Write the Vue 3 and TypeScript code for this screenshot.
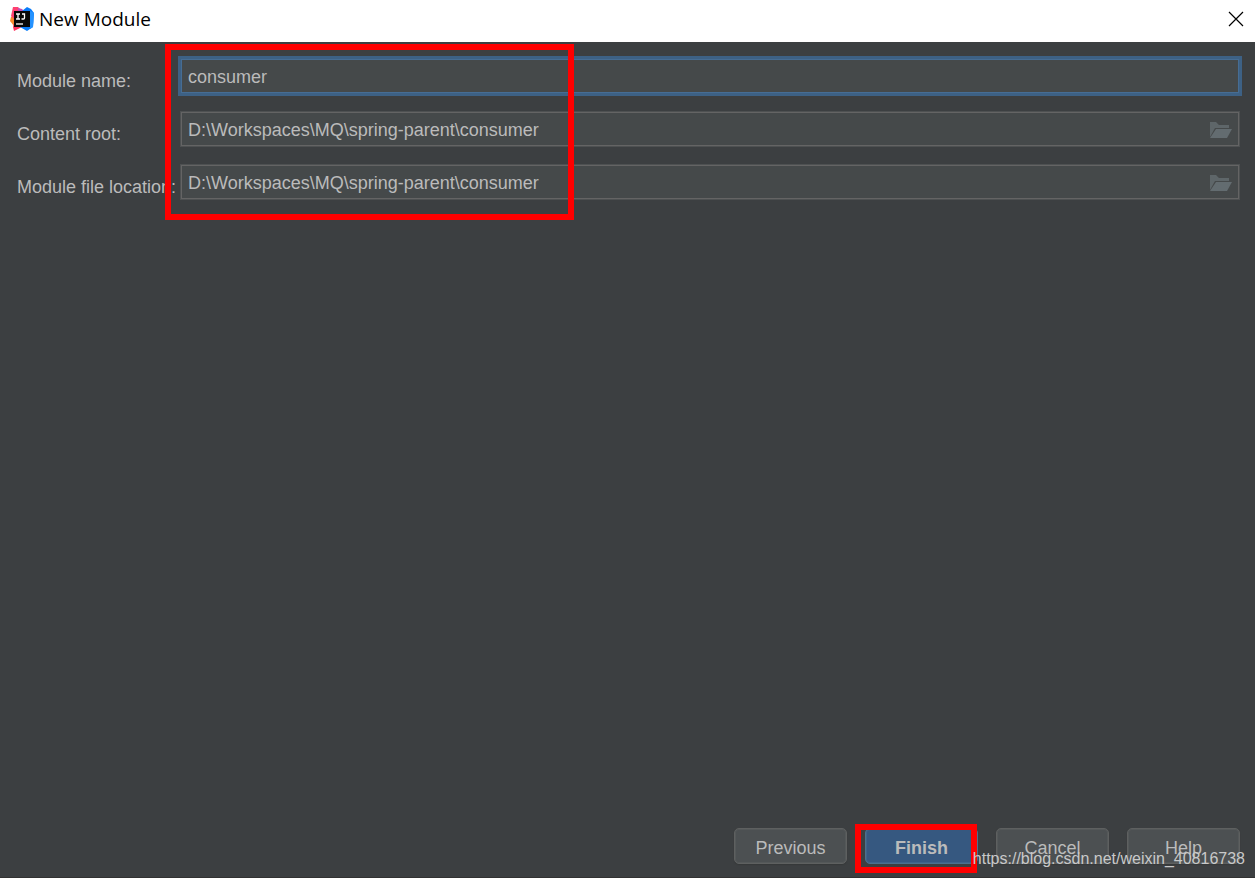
<script setup lang="ts">
import { ref } from 'vue'

interface Field {
  id: string
  label: string
  value: string
  browse: boolean
}

const fields = ref<Field[]>([
  { id: 'module-name', label: 'Module name:', value: 'consumer', browse: false },
  { id: 'content-root', label: 'Content root:', value: 'D:\\Workspaces\\MQ\\spring-parent\\consumer', browse: true },
  { id: 'file-location', label: 'Module file location:', value: 'D:\\Workspaces\\MQ\\spring-parent\\consumer', browse: true },
])
</script>

<template>
  <div class="dialog">
    <header class="titlebar">
      <svg class="logo" viewBox="0 0 24 24" aria-hidden="true">
        <path d="M4 8L1 10L0 14L4 19Z" fill="#f98a2c" />
        <path d="M3 0L8 0L13 5L4 12L1 9Z" fill="#fe4070" />
        <path d="M8 1L12 2L15 5L8 5Z" fill="#c050b8" />
        <path d="M4 16L14 19L4 24L3 20Z" fill="#fe315d" />
        <path d="M12 4L17 0L21 2L24 6L23 20L17 24L10 20Z" fill="#087cfa" />
        <path d="M20 4L24 6L23 20L20 22Z" fill="#2492ff" />
        <rect x="4" y="4" width="16" height="16" fill="#080808" />
        <path d="M6 7H10M8 7V12M6 12H10M12 7H14.500V11Q14.500 12 13.500 12H11.500" fill="none" stroke="#fff" stroke-width="1.300" />
        <path d="M6 17H13" stroke="#fff" stroke-width="1.300" />
      </svg>
      <h1 class="title">New Module</h1>
      <button class="close" type="button" aria-label="Close">
        <svg viewBox="0 0 16 16" aria-hidden="true"><path d="M1 1L15 15M15 1L1 15" stroke="#000" stroke-width="1.200" /></svg>
      </button>
    </header>

    <main class="content">
      <form class="form" @submit.prevent>
        <div v-for="field in fields" :key="field.id" class="row">
          <label :for="field.id">{{ field.label }}</label>
          <div class="field" :class="{ active: !field.browse }">
            <input :id="field.id" v-model="field.value" type="text" spellcheck="false" />
            <button v-if="field.browse" class="browse" type="button" aria-label="Browse">
              <svg viewBox="0 0 24 18" aria-hidden="true">
                <path d="M1 16V1H7L10 4H20V7H6Z" fill="#5e6669" />
                <path d="M7 8H23L18 17H1Z" fill="#636c70" />
              </svg>
            </button>
          </div>
        </div>
      </form>
      <div class="mark form-mark"></div>
    </main>

    <footer class="actions">
      <button class="action" type="button">Previous</button>
      <div class="primary-wrap">
        <button class="action primary" type="button">Finish</button>
        <div class="mark finish-mark"></div>
      </div>
      <button class="action" type="button">Cancel</button>
      <button class="action" type="button">Help</button>
    </footer>
    <div class="watermark">https://blog.csdn.net/weixin_40816738</div>
  </div>
</template>

<style>
body {
  margin: 0;
  background: #3c3f41;
}
</style>

<style scoped>
.dialog {
  position: relative;
  display: flex;
  flex-direction: column;
  min-height: 100vh;
  box-sizing: border-box;
  border-bottom: 1px solid #323232;
  background: #3c3f41;
  color: #bbbbbb;
  font: 18px/20px "Liberation Sans", Arial, sans-serif;
}

.titlebar {
  display: flex;
  align-items: center;
  height: 42px;
  padding: 0 11px 0 10px;
  box-sizing: border-box;
  background: #fff;
  color: #000;
}

.logo {
  width: 24px;
  height: 24px;
  margin: 0 5px 4px 0;
}

.title {
  flex: 1;
  margin: 0 0 4px;
  font: 400 19px/24px "Open Sans", "Noto Sans", sans-serif;
}

.close {
  width: 16px;
  height: 16px;
  margin: 0 0 4px;
  padding: 0;
  border: 0;
  background: none;
}

.close svg,
.browse svg {
  display: block;
  width: 100%;
  height: 100%;
}

.content {
  position: relative;
  flex: 1;
}

.form {
  display: flex;
  flex-direction: column;
  gap: 17px;
  padding: 16px 15px 16px 17px;
}

.row {
  display: grid;
  grid-template-columns: 163px 1fr;
}

.row label {
  padding-top: 13px;
  height: 20px;
  white-space: nowrap;
}

.field {
  display: flex;
  align-items: center;
  height: 36px;
  box-sizing: border-box;
  border: 1px solid #4e5152;
  background: #45494a;
  box-shadow: inset 0 0 0 1px #646464;
}

.field.active {
  border-color: #3d6185;
  box-shadow: inset 0 0 0 1px #466d94, 0 0 0 2px #3d6185;
}

.field input {
  flex: 1;
  min-width: 0;
  height: 34px;
  padding: 2px 7px 0;
  box-sizing: border-box;
  border: 0;
  outline: 0;
  background: transparent;
  color: #bbbbbb;
  font: inherit;
}

.browse {
  width: 24px;
  height: 18px;
  margin: 2px 6px 0 0;
  padding: 0;
  border: 0;
  background: none;
}

.mark {
  position: absolute;
  box-sizing: border-box;
  border: 6px solid #ff0000;
  pointer-events: none;
}

.form-mark {
  top: 2px;
  left: 165px;
  width: 409px;
  height: 176px;
}

.actions {
  display: flex;
  justify-content: flex-end;
  gap: 18px;
  padding: 0 15px 13px;
}

.action {
  width: 113px;
  height: 36px;
  padding: 3px 0 0;
  box-sizing: border-box;
  border: 1px solid #5e6060;
  border-radius: 5px;
  background: #4c5052;
  box-shadow: inset 0 0 0 1px #545859, 0 1px 1px #36393a;
  color: #bbbbbb;
  font: inherit;
}

.primary {
  border-color: #4c708c;
  background: #365880;
  box-shadow: inset 0 0 0 1px #3e648a;
  font-weight: 700;
}

.primary-wrap {
  position: relative;
}

.finish-mark {
  top: -4px;
  left: -10px;
  width: 122px;
  height: 49px;
}

.watermark {
  position: absolute;
  right: 10px;
  bottom: 8px;
  color: #c8c9c9;
  font-size: 16px;
  line-height: 20px;
  pointer-events: none;
}
</style>
